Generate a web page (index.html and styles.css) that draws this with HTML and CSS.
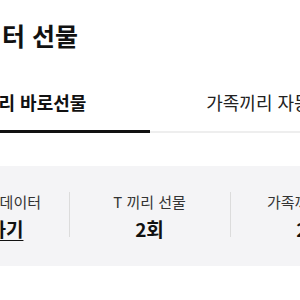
FILE: index.html
```html
<!DOCTYPE html>
<html lang="ko">
<head>
    <meta charset="UTF-8">
    <meta name="viewport" content="width=device-width, initial-scale=1.0">
    <link rel="stylesheet" href="styles.css">
    <title>데이터 선물</title>
</head>
<body>
    <div class="page">
        <h1 class="title">데이터 선물</h1>
        <div class="tabs">
            <div class="tab active">T끼리 바로선물</div>
            <div class="tab">가족끼리 자동선물</div>
        </div>
        <div class="summary">
            <div class="item">
                <div class="label">선물 가능 데이터</div>
                <div class="value"><a href="#">조회하기</a></div>
            </div>
            <div class="item">
                <div class="label">T 끼리 선물</div>
                <div class="value">2회</div>
            </div>
            <div class="item">
                <div class="label">가족끼리 선물</div>
                <div class="value">2회</div>
            </div>
        </div>
    </div>
</body>
</html>
```

FILE: styles.css
```css
html, body {
    margin: 0;
    padding: 0;
    overflow: hidden;
    background: #fff;
}

body {
    font-family: "Noto Sans CJK KR", "Noto Sans", sans-serif;
    color: #222;
}

.page {
    width: 500px;
    margin-left: -100px;
}

.title {
    margin: 0;
    padding: 18px 0 0 56px;
    font-size: 25px;
    font-weight: 700;
    line-height: 34px;
    color: #111;
}

.tabs {
    display: flex;
    margin-top: 38px;
    border-bottom: 2px solid #eee;
}

.tab {
    flex: 1;
    text-align: center;
    font-size: 18px;
    line-height: 24px;
    padding-bottom: 17px;
    color: #222;
}

.tab.active {
    text-indent: 7px;
    font-weight: 700;
    color: #111;
    box-shadow: inset 0 -3px 0 #111;
    margin-bottom: -2px;
    padding-bottom: 19px;
}

.summary {
    display: grid;
    grid-template-columns: repeat(3, 1fr);
    height: 100px;
    box-sizing: border-box;
    margin: 33px 9px 0 8px;
    padding-top: 25px;
    background: #f4f4f6;
}

.item {
    position: relative;
    text-align: center;
}

.item + .item::before {
    content: "";
    position: absolute;
    left: 0;
    top: 1px;
    height: 45px;
    border-left: 1px solid #dcdcdc;
}

.label {
    font-size: 15px;
    line-height: 22px;
    color: #333;
}

.value {
    margin-top: 3px;
    font-size: 19px;
    line-height: 26px;
    font-weight: 700;
    color: #111;
}

.value a {
    color: #111;
    text-decoration: underline;
    text-underline-offset: 3px;
}
```
